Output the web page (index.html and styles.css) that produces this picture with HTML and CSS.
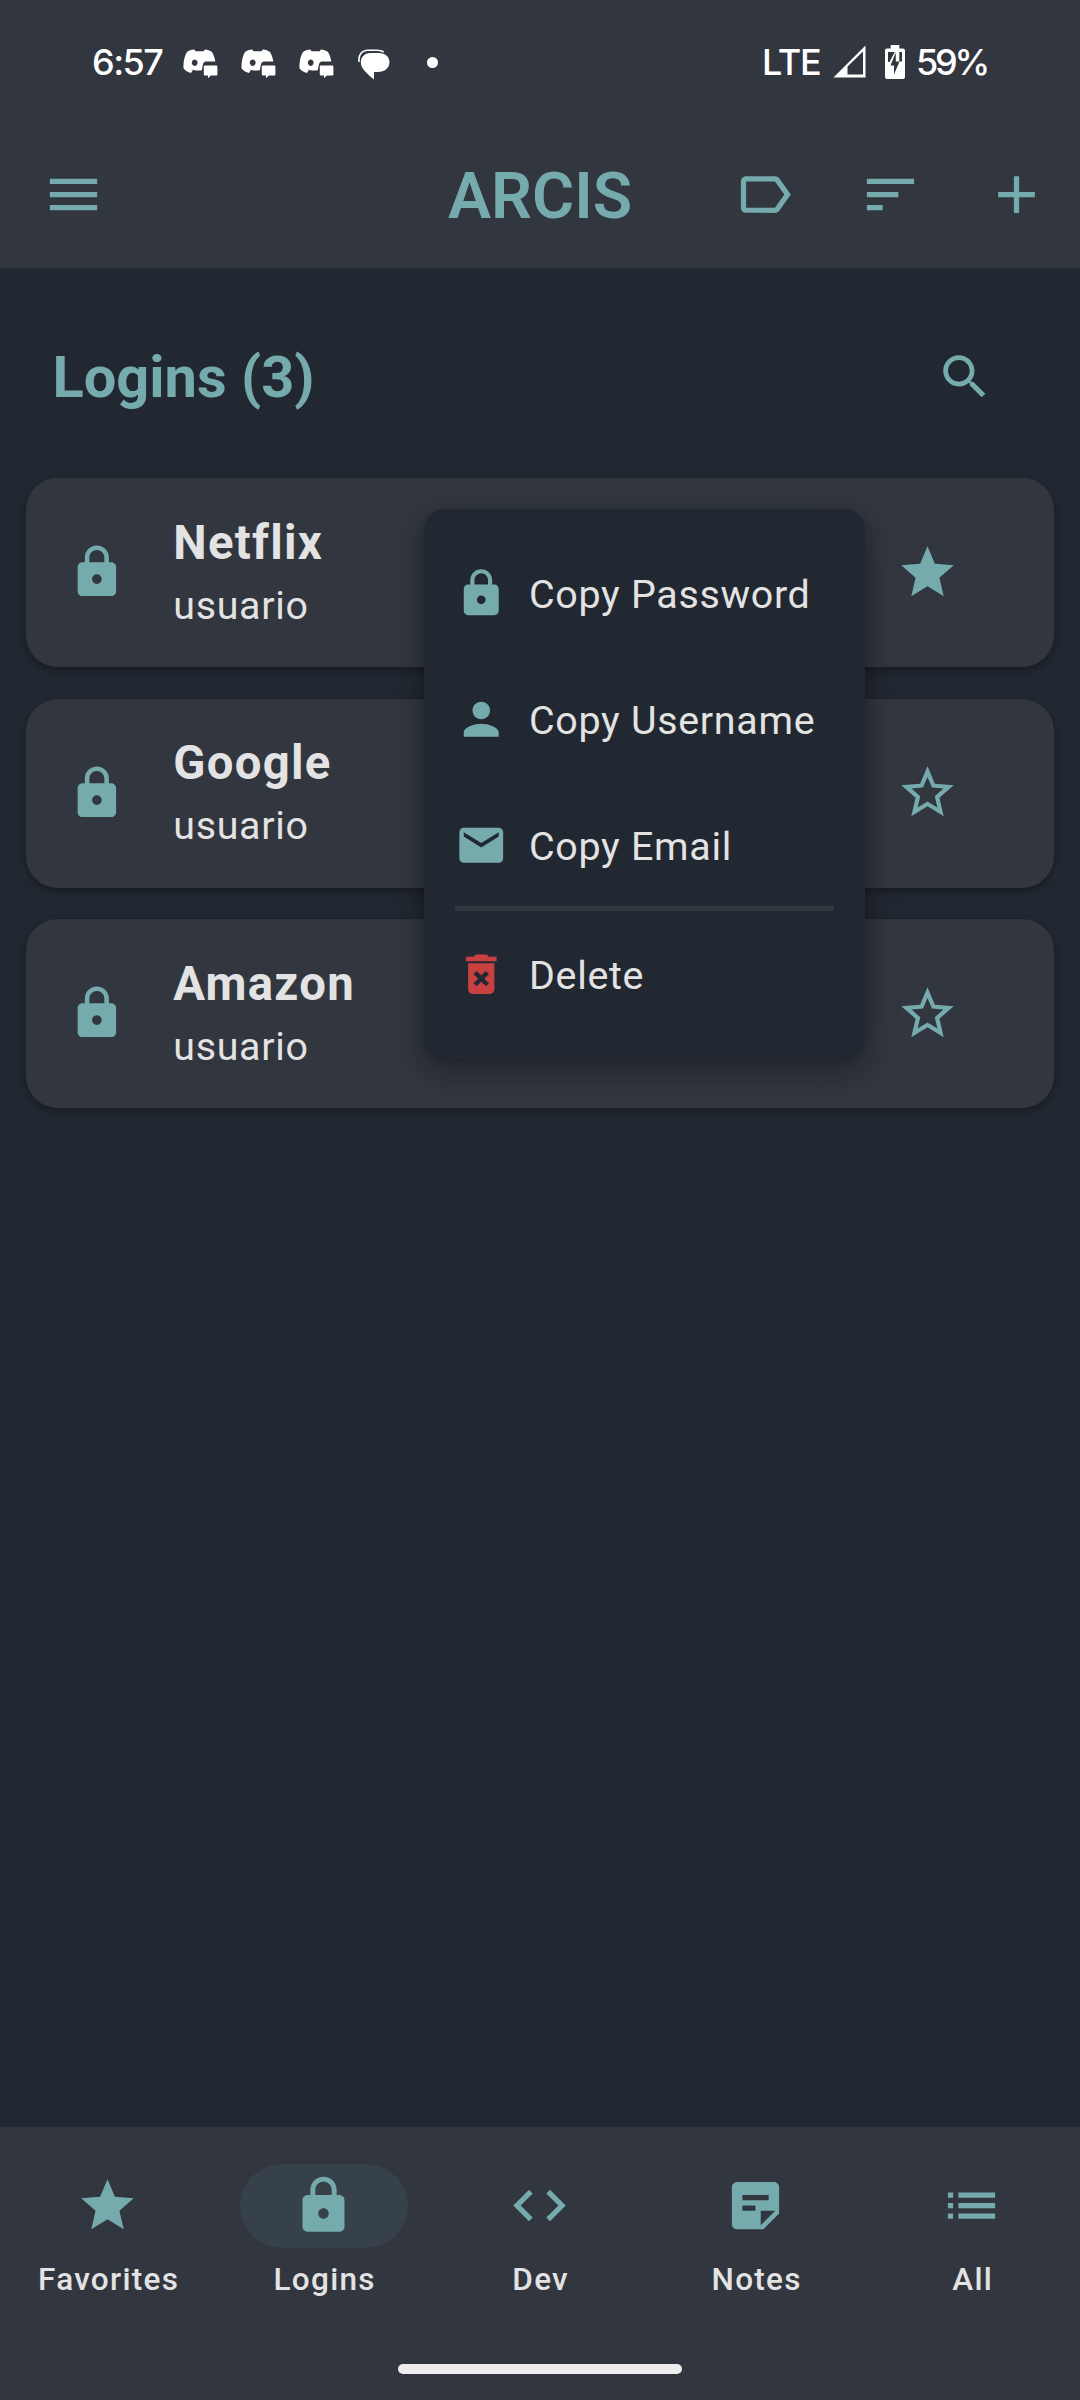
FILE: index.html
```html
<!DOCTYPE html>
<html lang="en">
<head>
<meta charset="utf-8">
<title>Arcis</title>
<link rel="stylesheet" href="styles.css">
</head>
<body>
<svg class="defs" width="0" height="0" aria-hidden="true">
  <symbol id="lock" viewBox="0 0 24 24"><path d="M18 8h-1V6c0-2.760-2.240-5-5-5S7 3.240 7 6v2H6c-1.100 0-2 .9-2 2v10c0 1.100.9 2 2 2h12c1.100 0 2-.9 2-2V10c0-1.100-.9-2-2-2zm-6 9c-1.100 0-2-.9-2-2s.9-2 2-2 2 .9 2 2-.9 2-2 2zm3.100-9H8.900V6c0-1.710 1.390-3.100 3.100-3.100 1.710 0 3.100 1.390 3.100 3.100v2z"/></symbol>
  <symbol id="star" viewBox="0 0 24 24"><path d="M12 17.270L18.180 21l-1.640-7.030L22 9.240l-7.190-.61L12 2 9.190 8.630 2 9.240l5.460 4.730L5.820 21z"/></symbol>
  <symbol id="star-border" viewBox="0 0 24 24"><path d="M22 9.240l-7.190-.62L12 2 9.190 8.630 2 9.240l5.460 4.730L5.820 21 12 17.270 18.180 21l-1.630-7.030L22 9.240zM12 15.400l-3.760 2.270 1-4.280-3.320-2.880 4.380-.38L12 6.100l1.710 4.040 4.380.38-3.320 2.880 1 4.280L12 15.400z"/></symbol>
  <symbol id="discord" viewBox="0 0 35 30"><path fill-rule="evenodd" d="M11.300.5C8.500.6 5.800 1.500 4 2.900 1.600 7 .3 12 .5 19.300c1.800 2.500 4.300 4 7.500 4.700l1.800-2.700-2-1.300c3 1.400 6.500 2 11 1.300L20 15.200c.5-1.700 1.500-2.700 3-2.700h9.300C31.800 8.400 30.500 5.300 29 2.900 26.900 1.400 24.600.7 21.800.5l-1.100 1.800h-8.200zM11.700 10.400a2.900 3.300 0 1 0 .01 0zM22 16.400h11.200c.7 0 1.200.5 1.200 1.200v7.700c0 .8-.5 1.200-1.200 1.200h-5.300L25 29.300v-2.800h-3c-.7 0-1.200-.4-1.200-1.200v-7.700c0-.7.5-1.200 1.200-1.200z"/></symbol>
</svg>
<div class="screen">
  <header class="top">
    <div class="status">
      <span class="clock">6:57</span>
      <div class="notifications">
        <svg class="discord"><use href="#discord"/></svg>
        <svg class="discord"><use href="#discord"/></svg>
        <svg class="discord"><use href="#discord"/></svg>
        <svg class="bubble" viewBox="0 0 32 31"><path d="M12 4h9C27 4 31.500 7.500 31.500 13.300S26.500 23 20 23h-4v7.500C9.500 25 2.800 20 2.800 13.300 2.800 8 7 4 12 4z"/><path class="bubble-back" d="M1.200 13C-.2 6 4 1.200 10 1.200H19c3 0 5 .4 6.800 2"/></svg>
        <span class="dot"></span>
      </div>
      <span class="network">LTE</span>
      <svg class="signal" viewBox="0 0 33 33"><path fill-rule="evenodd" d="M32.500.5v32H.5zM30 6.500L14.500 21.500V29.500H30z"/></svg>
      <svg class="battery" viewBox="0 0 20 34"><path d="M5.700 0h8.600v3.500H18c1 0 2 .8 2 2V32c0 1.200-1 2-2 2H2c-1.200 0-2-.8-2-2V5.500c0-1.200.8-2 2-2h3.700z"/><path class="cut" d="M3 7h6.800L4.500 17H3zM14.300 7H17v9.500h-2.700zM10.800 7.500v9h3.700L9 29.500v-9H5.500z"/></svg>
      <span class="percent">59%</span>
    </div>
    <div class="appbar">
      <svg class="icon menu-button" viewBox="0 0 24 24"><path d="M3 18h18v-2H3v2zm0-5h18v-2H3v2zm0-7v2h18V6H3z"/></svg>
      <h1>ARCIS</h1>
      <div class="actions">
        <svg class="icon" viewBox="0 0 24 24"><path d="M17.630 5.840C17.270 5.330 16.670 5 16 5L5 5.010C3.900 5.010 3 5.900 3 7v10c0 1.100.9 1.990 2 1.990L16 19c.67 0 1.270-.33 1.630-.84L22 12l-4.370-6.160zM16 17H5V7h11l3.550 5L16 17z"/></svg>
        <svg class="icon" viewBox="0 0 24 24"><path d="M3 18h6v-2H3v2zM3 6v2h18V6H3zm0 7h12v-2H3v2z"/></svg>
        <svg class="icon" viewBox="0 0 24 24"><path d="M19 13h-6v6h-2v-6H5v-2h6V5h2v6h6v2z"/></svg>
      </div>
    </div>
  </header>

  <main>
    <div class="heading">
      <h2>Logins (3)</h2>
      <svg class="icon search" viewBox="0 0 24 24"><path d="M15.500 14h-.79l-.28-.27C15.410 12.590 16 11.110 16 9.500 16 5.910 13.090 3 9.500 3S3 5.910 3 9.500 5.910 16 9.500 16c1.610 0 3.090-.59 4.230-1.570l.27.28v.79l5 4.990L20.490 19l-4.990-5zm-6 0C7.010 14 5 11.990 5 9.500S7.010 5 9.500 5 14 7.010 14 9.500 11.990 14 9.500 14z"/></svg>
    </div>
    <section class="cards">
      <article class="card">
        <svg class="icon card-lock"><use href="#lock"/></svg>
        <div class="info"><h3>Netflix</h3><p>usuario</p></div>
        <svg class="icon"><use href="#star"/></svg>
      </article>
      <article class="card">
        <svg class="icon card-lock"><use href="#lock"/></svg>
        <div class="info"><h3>Google</h3><p>usuario</p></div>
        <svg class="icon"><use href="#star-border"/></svg>
      </article>
      <article class="card">
        <svg class="icon card-lock"><use href="#lock"/></svg>
        <div class="info"><h3>Amazon</h3><p>usuario</p></div>
        <svg class="icon"><use href="#star-border"/></svg>
      </article>
    </section>
  </main>

  <div class="popup">
    <div class="option"><svg class="icon"><use href="#lock"/></svg><span>Copy Password</span></div>
    <div class="option"><svg class="icon" viewBox="0 0 24 24"><path d="M12 12c2.210 0 4-1.790 4-4s-1.790-4-4-4-4 1.790-4 4 1.790 4 4 4zm0 2c-2.670 0-8 1.340-8 4v2h16v-2c0-2.660-5.330-4-8-4z"/></svg><span>Copy Username</span></div>
    <div class="option"><svg class="icon" viewBox="0 0 24 24"><path d="M20 4H4c-1.100 0-1.990.9-1.990 2L2 18c0 1.100.9 2 2 2h16c1.100 0 2-.9 2-2V6c0-1.100-.9-2-2-2zm0 4l-8 5-8-5V6l8 5 8-5v2z"/></svg><span>Copy Email</span></div>
    <div class="divider"></div>
    <div class="option"><svg class="icon danger" viewBox="0 0 24 24"><path d="M6 19c0 1.100.9 2 2 2h8c1.100 0 2-.9 2-2V7H6v12zm2.460-7.120l1.410-1.410L12 12.590l2.120-2.120 1.410 1.410L13.410 14l2.120 2.120-1.410 1.410L12 15.410l-2.120 2.120-1.410-1.410L10.590 14l-2.130-2.120zM15.500 4l-1-1h-5l-1 1H5v2h14V4z"/></svg><span>Delete</span></div>
  </div>

  <nav class="bottom">
    <div class="tabs">
      <div class="tab"><div class="pill"><svg class="icon"><use href="#star"/></svg></div><span>Favorites</span></div>
      <div class="tab"><div class="pill active"><svg class="icon"><use href="#lock"/></svg></div><span>Logins</span></div>
      <div class="tab"><div class="pill"><svg class="icon" viewBox="0 0 24 24"><path d="M9.400 16.600L4.800 12l4.600-4.600L8 6l-6 6 6 6 1.400-1.400zm5.200 0l4.600-4.600-4.600-4.600L16 6l6 6-6 6-1.400-1.400z"/></svg></div><span>Dev</span></div>
      <div class="tab"><div class="pill"><svg class="icon" viewBox="0 0 24 24"><path d="M19 3H4.990C3.890 3 3 3.900 3 5v14c0 1.100.89 2 1.990 2H15l6-6V5c0-1.100-.9-2-2-2zM7 8h10v2H7V8zm5 6H7v-2h5v2zm2 5.500V14h5.500L14 19.500z"/></svg></div><span>Notes</span></div>
      <div class="tab"><div class="pill"><svg class="icon" viewBox="0 0 24 24"><path d="M3 13h2v-2H3v2zm0 4h2v-2H3v2zm0-8h2V7H3v2zm4 4h14v-2H7v2zm0 4h14v-2H7v2zM7 7v2h14V7H7z"/></svg></div><span>All</span></div>
    </div>
    <div class="home-bar"></div>
  </nav>
</div>
</body>
</html>
```
FILE: styles.css
```css
* { box-sizing: border-box; margin: 0; padding: 0; }

body {
  background: #222831;
  color: #e3e3e3;
  font-family: Roboto, sans-serif;
}

.defs { display: block; }

.screen {
  position: relative;
  display: flex;
  flex-direction: column;
  width: 1080px;
  height: 2400px;
  overflow: hidden;
}

.icon {
  display: block;
  flex: none;
  width: 63px;
  height: 63px;
  fill: #76abae;
}

/* Status bar and app bar */
.top {
  height: 268px;
  background: #31363f;
}

.status {
  display: flex;
  align-items: center;
  height: 123px;
  padding-left: 92px;
  color: #fff;
  fill: #fff;
  font: 500 36px/44px Inter, sans-serif;
}

.status svg { display: block; flex: none; }
.clock { width: 91px; letter-spacing: -1.500px; }
.notifications { display: flex; align-items: center; width: 579px; padding-top: 5px; }
.discord { width: 35px; height: 30px; margin-right: 23px; }
.bubble { width: 32px; height: 31px; margin-left: 1px; }
.bubble-back { fill: none; stroke: #fff; stroke-width: 1.6; }
.dot { width: 11px; height: 11px; margin: 0 0 4px 37px; border-radius: 50%; background: #fff; }
.network { width: 71px; letter-spacing: -1.200px; }
.signal { width: 33px; height: 33px; }
.battery { width: 20px; height: 34px; margin-left: 19px; }
.cut { fill: #31363f; }
.percent { margin-left: 11px; letter-spacing: -3.200px; }

.appbar {
  display: grid;
  grid-template-columns: 378px 1fr 378px;
  align-items: center;
  height: 143px;
}

.menu-button { margin-left: 42px; }

.appbar h1 {
  padding-top: 2px;
  color: #76abae;
  font-size: 64.500px;
  font-weight: 600;
  line-height: 76px;
  text-align: center;
}

.actions { display: flex; gap: 63px; padding-left: 30.500px; }

/* Login list */
main { flex: 1; }

.heading {
  display: flex;
  align-items: center;
  justify-content: space-between;
  height: 210px;
  padding: 8px 86.500px 0 52.500px;
}

.heading h2 {
  color: #76abae;
  font-size: 57.750px;
  font-weight: 700;
  line-height: 68px;
}

.search { width: 57.750px; height: 57.750px; }

.cards {
  display: flex;
  flex-direction: column;
  gap: 31.500px;
  padding: 0 26px;
}

.card {
  display: flex;
  align-items: center;
  height: 189px;
  padding: 0 95.500px 1px 42px;
  border-radius: 31.500px;
  background: #31363f;
  box-shadow: 0 3px 8px rgba(0, 0, 0, .35);
}

.card-lock { width: 57.750px; height: 57.750px; }
.info { flex: 1; padding: 5px 0 0 47.500px; }

.info h3 {
  font-size: 47.250px;
  font-weight: 700;
  line-height: 62px;
  letter-spacing: 1.300px;
}

.info p {
  font-size: 39.400px;
  line-height: 64px;
  letter-spacing: .7px;
}

/* Context menu over the list */
.popup {
  position: absolute;
  top: 509px;
  left: 424px;
  width: 441px;
  height: 549px;
  padding: 21px 31px;
  border-radius: 21px;
  background: #222831;
  box-shadow: 0 12px 32px rgba(0, 0, 0, .35), 0 2px 8px rgba(0, 0, 0, .1);
}

.option {
  display: flex;
  align-items: center;
  gap: 21.500px;
  height: 126.300px;
  font-size: 39.400px;
  letter-spacing: .7px;
  white-space: nowrap;
}

.option span { padding-top: 2px; }
.option .icon { width: 52.500px; height: 52.500px; }
.option .danger { fill: #c94040; }
.divider { height: 5px; margin-top: -3px; background: #31363f; }

/* Bottom navigation */
.bottom {
  display: flex;
  flex-direction: column;
  align-items: center;
  height: 273px;
  background: #31363f;
}

.tabs {
  display: grid;
  grid-template-columns: repeat(5, 216px);
  height: 237px;
  padding-top: 37px;
}

.tab {
  display: flex;
  flex-direction: column;
  align-items: center;
  gap: 11px;
  font-size: 31.500px;
  font-weight: 500;
  line-height: 42px;
  letter-spacing: 1.300px;
}

.tab span { padding-left: 1.300px; }

.pill {
  display: grid;
  place-items: center;
  width: 168px;
  height: 84px;
  padding: 0 1px 1px 0;
  border-radius: 42px;
}

.active { background: #374149; }
.home-bar { width: 284px; height: 10px; border-radius: 5px; background: #eee; }
```
